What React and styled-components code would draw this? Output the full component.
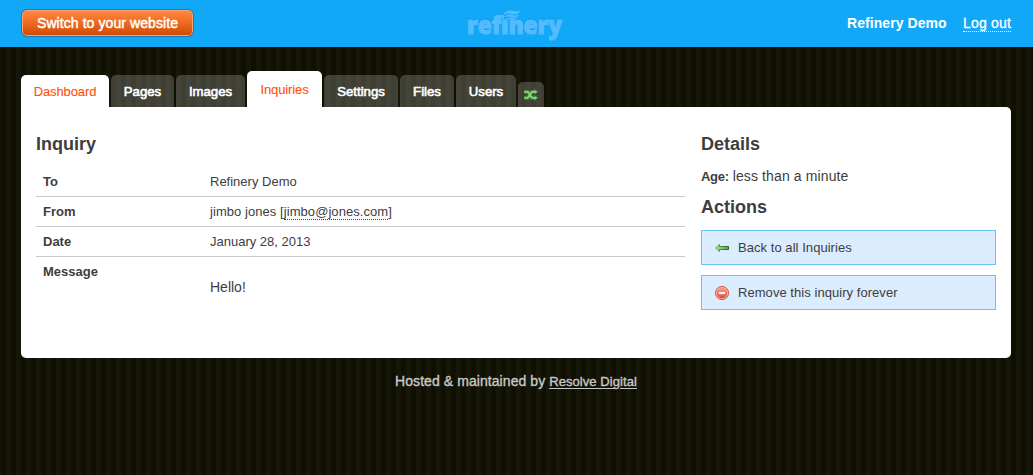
import React from "react";
import styled, { createGlobalStyle } from "styled-components";

const GlobalStyle = createGlobalStyle`
  * { box-sizing: border-box; }
  html, body { margin: 0; min-height: 100vh; }
  body {
    font-family: "Liberation Sans", Arial, sans-serif;
    font-size: 14px;
    color: #3e3d40;
    background: repeating-linear-gradient(90deg, #161609 0, #161609 1px, #101002 1px, #101002 6px, #161609 6px, #161609 10px);
  }
  #root { min-height: 100vh; }
`;

const Header = styled.header`
  height: 47px;
  padding: 0 22px 0 21px;
  background: #11a8f7;
  display: grid;
  grid-template-columns: 1fr 98px 1fr;
  align-items: start;
`;

const SwitchButton = styled.a`
  justify-self: start;
  width: 173px;
  height: 28px;
  margin-top: 9px;
  border: 1px solid #1f78b8;
  border-radius: 6px;
  box-shadow: inset 0 0 0 1px #ffa46c;
  background: linear-gradient(#ff8a48, #f06c22 45%, #cc4a00);
  color: #fff;
  line-height: 26px;
  letter-spacing: 0.08px;
  text-align: center;
  -webkit-text-stroke: 0.45px #fff;
`;

const Logo = styled.svg`
  display: block;
  width: 98px;
  height: 40px;
  margin-top: 7px;
  overflow: visible;
`;

const Account = styled.div`
  justify-self: end;
  display: flex;
  gap: 16px;
  margin-top: 15px;
  line-height: 16px;
  color: #fff;
`;

const UserName = styled.strong`
  width: 100px;
  white-space: nowrap;
  letter-spacing: 0.06px;
`;

const LogOut = styled.a`
  height: 17px;
  border-bottom: 1px dotted #fff;
  letter-spacing: 0.18px;
  -webkit-text-stroke: 0.3px #fff;
`;

const Main = styled.main`
  width: 990px;
  margin: 0 0 0 21px;
`;

const Tabs = styled.nav`
  display: flex;
  align-items: flex-end;
  gap: 2px;
  height: 60px;
`;

const Tab = styled.a`
  width: ${(p) => p.$width}px;
  height: ${(p) => p.$height || 32}px;
  border-radius: 5px 5px 0 0;
  display: flex;
  justify-content: center;
  padding-top: ${(p) => (p.$height === 36 ? 11 : 9)}px;
  line-height: 16px;
  font-size: ${(p) => (p.$light ? 13 : 13.2)}px;
  letter-spacing: ${(p) => (p.$light ? -0.12 : 0)}px;
  white-space: nowrap;
  background: ${(p) => (p.$light ? "#fff" : "rgba(255,255,255,0.2)")};
  color: ${(p) => (p.$light ? "#ff4f0a" : "#fff")};
  -webkit-text-stroke: ${(p) => (p.$light ? "0.1px #ff4f0a" : "0.6px #fff")};
`;

const IconTab = styled(Tab)`
  padding-top: 6px;
`;

const Panel = styled.section`
  height: 251px;
  padding: 27px 15px 0;
  border-radius: 0 5px 5px 5px;
  background: #fff;
  display: grid;
  grid-template-columns: 649px 295px;
  gap: 16px;
`;

const Heading = styled.h2`
  margin: 0;
  font-size: 18px;
  line-height: 20px;
`;

const Records = styled.dl`
  margin: 13px 0 0;
  font-size: 13px;
`;

const Record = styled.div`
  display: grid;
  grid-template-columns: 167px 1fr;
  height: 30px;
  padding: 7px 7px 0;
  line-height: 15px;
  border-bottom: ${(p) => (p.$last ? "0" : "1px solid #cacaca")};
`;

const Term = styled.dt`
  font-weight: bold;
`;

const Value = styled.dd`
  margin: 0;
  letter-spacing: ${(p) => p.$tracking || 0}px;
`;

const Message = styled(Value)`
  padding-top: 15px;
  line-height: 16px;
  font-size: 14px;
`;

const Email = styled.a`
  display: inline-block;
  height: 16px;
  border-bottom: 1px dotted #3e3d40;
`;

const Age = styled.p`
  margin: 14px 0 12px;
  font-size: 14px;
  line-height: 17px;
  letter-spacing: 0.12px;
`;

const AgeLabel = styled.strong`
  font-size: 13px;
  letter-spacing: -0.3px;
`;

const Actions = styled.div`
  display: grid;
  gap: 10px;
  margin-top: 13px;
`;

const Action = styled.a`
  height: 35px;
  padding: 0 12px;
  display: flex;
  align-items: center;
  gap: 8px;
  border: 1px solid #6bc1f1;
  background: #dbecff;
  font-size: 13px;
  letter-spacing: 0.05px;
`;

const Icon = styled.svg`
  display: block;
  width: 16px;
  height: 16px;
`;

const Footer = styled.footer`
  margin-top: 15px;
  text-align: center;
  line-height: 16px;
  letter-spacing: 0.07px;
  color: #c8c8c8;
  -webkit-text-stroke: 0.35px #c8c8c8;
`;

const FooterLink = styled.a`
  font-size: 13px;
  text-decoration: underline;
  text-underline-offset: 2px;
`;

const Wordmark = styled.text`
  font-family: "Open Sans", sans-serif;
  font-weight: 800;
  font-size: 24px;
  fill: #54bbfd;
  stroke: #54bbfd;
  stroke-width: 1.1px;
  filter: drop-shadow(0 -1px 0 #0b9beb);
`;

const RefineryLogo = () => (
  <Logo viewBox="0 -1 98 40">
    <Wordmark x="0.300" y="25.500" textLength="95" lengthAdjust="spacingAndGlyphs">refinery</Wordmark>
    <path d="M37 0h17v11.500H37z" fill="#11a8f7" />
    <path d="M36 7c3-5 8-5 11-4 3 .8 5 .5 7-1-2 4-6 5-9 4-3-.8-6-.4-9 1z" fill="#54bbfd" />
    <path d="M37 9c3-3 7-3 9-2 3 1 4 .3 6-1-2 4-5 4-8 3-2.500-.8-4-.8-7 0z" fill="#54bbfd" />
    <path d="M39 11c2-1.700 5-1.500 7-.8 2 .4 3 0 4-.9-1 2.500-3 3-5 2.400-2-.6-4-.8-6-.7z" fill="#54bbfd" />
  </Logo>
);

const ShuffleIcon = () => (
  <Icon viewBox="0 0 16 16">
    <g fill="none" strokeLinejoin="round">
      <path d="M1 3.800h4L9 9.800h3M1 9.800h4L9 3.800h3" stroke="#3c8738" strokeWidth="3.700" />
      <path d="M11 .5 15.500 3.800 11 7zM11 6.600 15.500 9.800 11 13.200z" fill="#3c8738" />
      <path d="M1.300 3.800h3.500L9 9.800h4M1.300 9.800h3.500L9 3.800h4" stroke="#91d07f" strokeWidth="1.800" />
      <path d="m12 2.200 2.300 1.600L12 5.400zM12 8.200l2.300 1.600L12 11.400z" fill="#91d07f" />
    </g>
  </Icon>
);

const BackIcon = () => (
  <Icon viewBox="0 0 16 16">
    <defs>
      <linearGradient id="arrow" x1="0" x2="1">
        <stop stopColor="#a5dc92" />
        <stop offset="1" stopColor="#62a452" />
      </linearGradient>
      <linearGradient id="arrowEdge" x1="0" x2="1">
        <stop stopColor="#66b956" />
        <stop offset="1" stopColor="#24641d" />
      </linearGradient>
    </defs>
    <path d="M1.500 8 5.500 4.500v2h9v3h-9v2z" fill="url(#arrow)" stroke="url(#arrowEdge)" strokeLinejoin="round" />
  </Icon>
);

const RemoveIcon = () => (
  <Icon viewBox="0 0 16 16">
    <defs>
      <linearGradient id="remove" x2="0" y2="1">
        <stop stopColor="#f6a08c" />
        <stop offset="1" stopColor="#e4482f" />
      </linearGradient>
    </defs>
    <circle cx="8" cy="8" r="6.600" fill="#f8b0a0" stroke="#d2503f" strokeWidth=".9" />
    <circle cx="8" cy="8" r="5.200" fill="url(#remove)" />
    <rect x="4.500" y="6.700" width="7" height="2.600" rx=".4" fill="#fff" stroke="#d9503b" strokeWidth=".4" />
  </Icon>
);

const tabs = [
  { label: "Dashboard", width: 88, light: true },
  { label: "Pages", width: 63 },
  { label: "Images", width: 69 },
  { label: "Inquiries", width: 75, height: 36, light: true },
  { label: "Settings", width: 74 },
  { label: "Files", width: 54 },
  { label: "Users", width: 60 },
];

export default function App() {
  return (
    <>
      <GlobalStyle />
      <Header>
        <SwitchButton>Switch to your website</SwitchButton>
        <RefineryLogo />
        <Account>
          <UserName>Refinery Demo</UserName>
          <LogOut>Log out</LogOut>
        </Account>
      </Header>
      <Main>
        <Tabs>
          {tabs.map((t) => (
            <Tab key={t.label} $width={t.width} $height={t.height} $light={t.light}>{t.label}</Tab>
          ))}
          <IconTab $width={26} $height={25}><ShuffleIcon /></IconTab>
        </Tabs>
        <Panel>
          <div>
            <Heading>Inquiry</Heading>
            <Records>
              <Record><Term>To</Term><Value>Refinery Demo</Value></Record>
              <Record><Term>From</Term><Value $tracking={0.06}>jimbo jones [<Email>jimbo@jones.com</Email>]</Value></Record>
              <Record><Term>Date</Term><Value>January 28, 2013</Value></Record>
              <Record $last><Term>Message</Term><Message>Hello!</Message></Record>
            </Records>
          </div>
          <aside>
            <Heading>Details</Heading>
            <Age><AgeLabel>Age:</AgeLabel> less than a minute</Age>
            <Heading>Actions</Heading>
            <Actions>
              <Action><BackIcon />Back to all Inquiries</Action>
              <Action><RemoveIcon />Remove this inquiry forever</Action>
            </Actions>
          </aside>
        </Panel>
        <Footer>Hosted &amp; maintained by <FooterLink>Resolve Digital</FooterLink></Footer>
      </Main>
    </>
  );
}
